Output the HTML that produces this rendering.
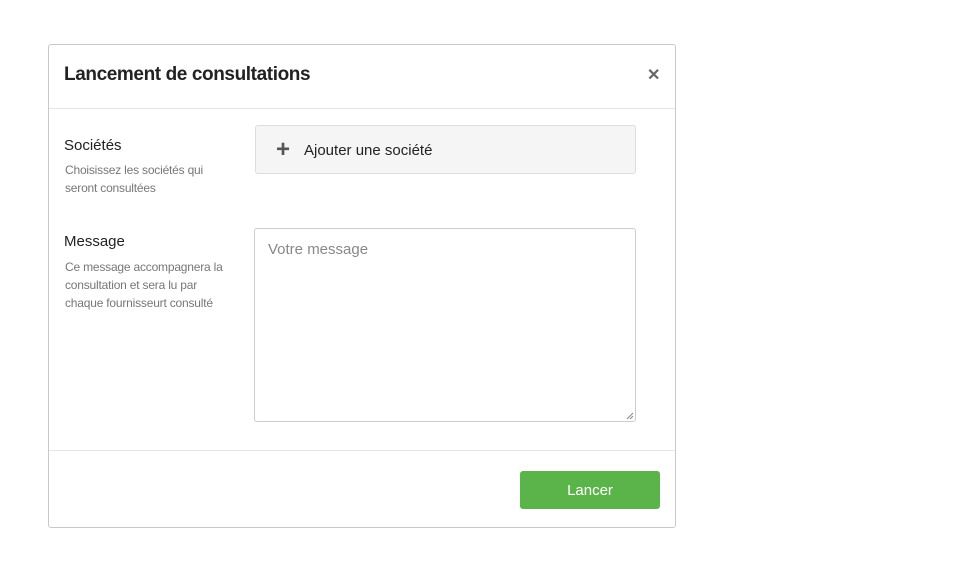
<!DOCTYPE html>
<html><head><meta charset="utf-8"><style>
*{box-sizing:border-box;margin:0;padding:0}
body{width:960px;height:576px;background:#fff;font-family:"Liberation Sans",sans-serif;position:relative;overflow:hidden}
.m{position:absolute;left:48px;top:44px;width:628px;height:484px;border:1px solid #c8c8c8;border-radius:3px;background:#fff}
.t{position:absolute;left:15px;top:19px;font-size:19px;font-weight:bold;color:#222;letter-spacing:-0.4px}
.x{position:absolute;left:598px;top:20px;font-size:16px;font-weight:bold;color:#666}
.hr{position:absolute;left:0;right:0;height:1px;background:#e5e5e5}
.l{position:absolute;left:15px;font-size:15px;color:#222}
.d{position:absolute;left:16px;font-size:12px;color:#777;line-height:18px;letter-spacing:-0.2px}
.b{position:absolute;left:206px;top:80px;width:381px;height:49px;background:#f5f5f5;border:1px solid #ddd;border-radius:3px;font-size:15px;color:#222;padding:16px 0 0 48px}
.p{position:absolute;left:20px;top:15px;font-size:24px;color:#555;line-height:18px;font-weight:bold}
.ta{position:absolute;left:205px;top:183px;width:382px;height:194px;border:1px solid #ccc;border-radius:3px;font-size:15px;color:#888;padding:12px 13px}
.ta svg{position:absolute;right:1px;bottom:1px}
.g{position:absolute;left:471px;top:426px;width:140px;height:38px;background:#5bb449;border-radius:3px;color:#fff;font-size:15px;text-align:center;line-height:40px}
</style></head><body>
<div class="m">
<div class="t">Lancement de consultations</div>
<div class="x">✕</div>
<div class="hr" style="top:63px"></div>
<div class="l" style="top:92px">Sociétés</div>
<div class="d" style="top:116px">Choisissez les sociétés qui<br>seront consultées</div>
<div class="b"><span class="p">+</span>Ajouter une société</div>
<div class="l" style="top:188px">Message</div>
<div class="d" style="top:213px">Ce message accompagnera la<br>consultation et sera lu par<br>chaque fournisseurt consulté</div>
<div class="ta">Votre message<svg width="8" height="8"><path d="M1 7L7 1M4 7L7 4" stroke="#888" stroke-width="1"/></svg></div>
<div class="hr" style="top:405px"></div>
<div class="g">Lancer</div>
</div>
</body></html>
